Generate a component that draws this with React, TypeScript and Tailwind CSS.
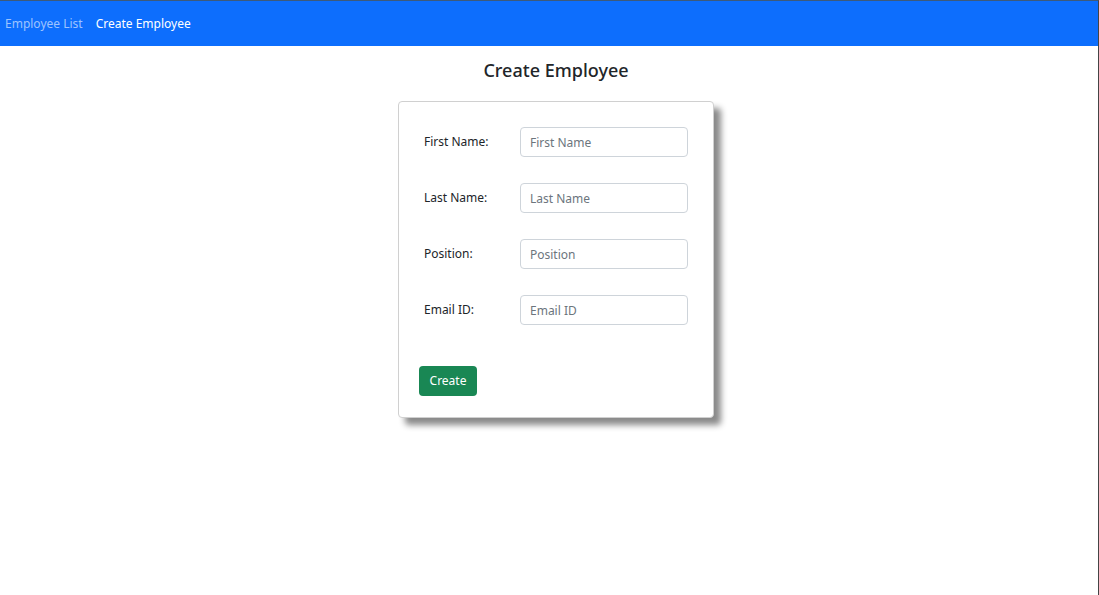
import React from "react";

const fields = [
  { label: "First Name:", ph: "First Name" },
  { label: "Last Name:", ph: "Last Name" },
  { label: "Position:", ph: "Position" },
  { label: "Email ID:", ph: "Email ID" },
];

export default function App() {
  return (
    <div
      className="w-[1099px] h-[595px] bg-white border-t border-t-[#3d5a7a] border-r border-r-[#444444] overflow-hidden text-[#212529]"
      style={{ fontFamily: '"Noto Sans", "Open Sans", sans-serif' }}
    >
      <nav className="h-[45px] bg-[#0d6efd] flex items-center pl-[5px] gap-[13px] text-[12px]">
        <span className="text-white/60">Employee List</span>
        <span className="text-white">Create Employee</span>
      </nav>
      <div className="flex flex-col items-center pl-[14px]">
        <h2 className="mt-[13px] text-[18px] font-medium leading-[22px] text-[#212529]">
          Create Employee
        </h2>
        <div className="mt-[20px] w-[316px] h-[317px] border border-[#d0d0d0] rounded-[4px] bg-white shadow-[7px_7px_6px_#8a8a8a] pt-[25px] px-[20px]">
          <div className="flex flex-col gap-[26px]">
            {fields.map((f) => (
              <div key={f.label} className="flex items-center h-[30px]">
                <label className="w-[101px] pl-[5px] text-[12px]">{f.label}</label>
                <input
                  placeholder={f.ph}
                  className="w-[168px] h-[30px] border border-[#ced4da] rounded-[4px] px-[9px] text-[12px] placeholder:text-[#6c757d] outline-none"
                />
              </div>
            ))}
          </div>
          <button className="mt-[41px] w-[58px] h-[30px] bg-[#198754] text-white rounded-[4px] text-[12px]">
            Create
          </button>
        </div>
      </div>
    </div>
  );
}
